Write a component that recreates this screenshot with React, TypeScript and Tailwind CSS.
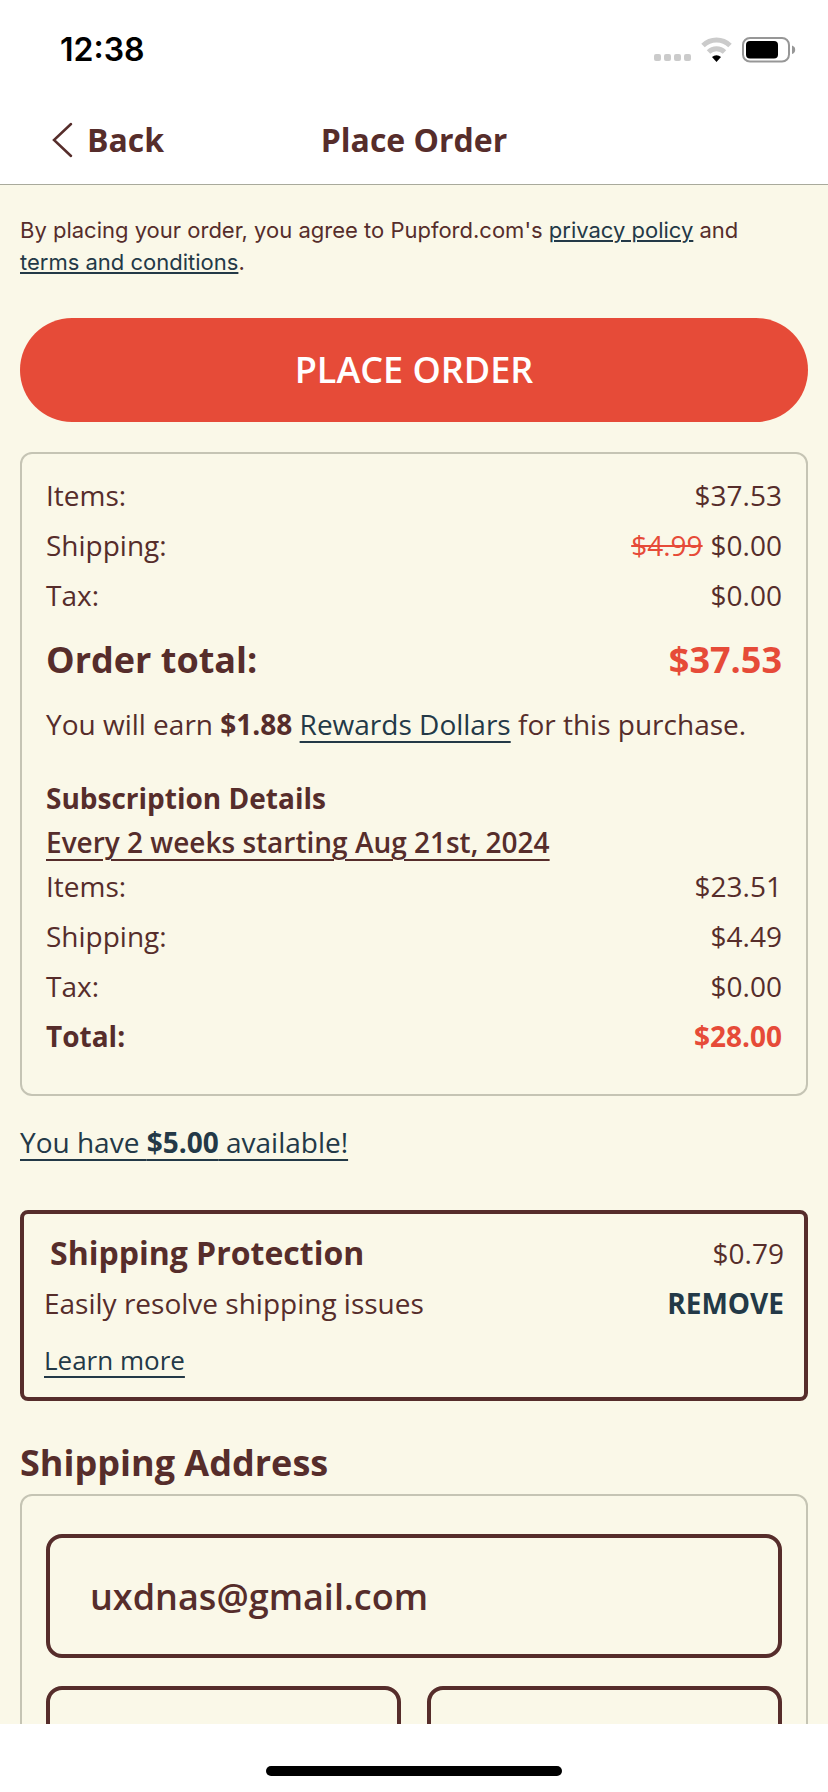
import type { ReactNode } from "react";

const ORDER_ROWS = [
  { label: "Items:", value: "$37.53" },
  { label: "Shipping:", value: "$0.00", was: "$4.99" },
  { label: "Tax:", value: "$0.00" },
];

const SUBSCRIPTION_ROWS = [
  { label: "Items:", value: "$23.51" },
  { label: "Shipping:", value: "$4.49" },
  { label: "Tax:", value: "$0.00" },
];

function StatusBar() {
  return (
    <div className="flex h-[100px] items-center justify-between pl-[60px] pr-8">
      <span className="font-[Inter] text-[32px] font-semibold leading-9 text-black">12:38</span>
      <div className="flex items-center gap-[10px]">
        <svg width="37" height="26" viewBox="0 0 37 26" fill="#cbcbcb" aria-hidden="true">
          <rect x="0" y="17" width="7" height="7" rx="2" />
          <rect x="10" y="17" width="7" height="7" rx="2" />
          <rect x="20" y="17" width="7" height="7" rx="2" />
          <rect x="30" y="17" width="7" height="7" rx="2" />
        </svg>
        <svg width="31" height="26" viewBox="0 0 31 26" fill="none" aria-hidden="true">
          <path d="M2 8.500a19.500 19.500 0 0 1 27 0" stroke="#cbcbcb" strokeWidth="5" />
          <path d="M7.500 15a11.600 11.600 0 0 1 16 0" stroke="#cbcbcb" strokeWidth="5" />
          <path d="M11 20a6.600 6.600 0 0 1 9 0L15.500 25z" fill="#000" />
        </svg>
        <svg width="54" height="26" viewBox="0 0 54 26" fill="none" aria-hidden="true">
          <rect x="1" y="1" width="46" height="23.500" rx="7" stroke="#979797" strokeWidth="2" />
          <rect x="4" y="4" width="32" height="17.500" rx="4" fill="#000" />
          <path d="M50 8.500c2 .6 3.200 2.300 3.200 4.300s-1.200 3.700-3.200 4.300z" fill="#979797" />
        </svg>
      </div>
    </div>
  );
}

function Row({ label, children }: { label: string; children: ReactNode }) {
  return (
    <div className="mb-[6px] flex justify-between leading-[44px]">
      <dt>{label}</dt>
      <dd>{children}</dd>
    </div>
  );
}

export default function App() {
  return (
    <div className="flex h-screen flex-col bg-white font-['Open_Sans',sans-serif] text-[28px] text-[#562d2b]">
      <StatusBar />

      <header className="grid h-[85px] shrink-0 grid-cols-3 items-center border-b border-[#a9aa9c] pb-1">
        <button type="button" className="ml-[52px] flex items-center gap-[14px] text-[32px] font-bold">
          <svg width="21" height="36" viewBox="0 0 21 36" fill="none" aria-hidden="true">
            <path d="M19 2 2 18l17 16" stroke="currentColor" strokeWidth="2.500" strokeLinecap="round" />
          </svg>
          Back
        </button>
        <h1 className="text-center text-[32px] font-bold">Place Order</h1>
      </header>

      <main className="min-h-0 flex-1 overflow-y-auto bg-[#faf8e8] px-5 pt-[29px] [scrollbar-width:none]">
        <p className="font-[Inter] text-[22px] leading-8">
          By placing your order, you agree to Pupford.com's{" "}
          <a href="#privacy" className="text-[#233947] underline decoration-2 underline-offset-2">
            privacy policy
          </a>{" "}
          and{" "}
          <br />
          <a href="#terms" className="text-[#233947] underline decoration-2 underline-offset-2">
            terms and conditions
          </a>
          .
        </p>

        <button
          type="button"
          className="mt-10 h-[104px] w-full rounded-full bg-[#e64b38] text-[36px] font-semibold text-white"
        >
          PLACE ORDER
        </button>

        {/* Order summary */}
        <section className="mt-[30px] rounded-xl border-2 border-[#c5c4b4] px-6 pt-[19px] pb-[30px]">
          <dl>
            {ORDER_ROWS.map((row) => (
              <Row key={row.label} label={row.label}>
                {row.was && <s className="mr-2 text-[#e64b38]">{row.was}</s>}
                {row.value}
              </Row>
            ))}
            <div className="mt-[11px] flex justify-between text-[36px] font-bold leading-[64px]">
              <dt>Order total:</dt>
              <dd className="text-[#e64b38]">$37.53</dd>
            </div>
          </dl>
          <p className="mt-[2px] leading-[60px]">
            You will earn <b>$1.88</b>{" "}
            <a href="#rewards" className="text-[#233947] underline decoration-2 underline-offset-6">
              Rewards Dollars
            </a>{" "}
            for this purchase.
          </p>
          <h2 className="mt-[22px] font-bold leading-[44px]">Subscription Details</h2>
          <p className="font-semibold leading-[44px] underline decoration-2 underline-offset-6">
            Every 2 weeks starting Aug 21st, 2024
          </p>
          <dl>
            {SUBSCRIPTION_ROWS.map((row) => (
              <Row key={row.label} label={row.label}>
                {row.value}
              </Row>
            ))}
            <div className="mb-[6px] flex justify-between font-bold leading-[44px]">
              <dt>Total:</dt>
              <dd className="text-[#e64b38]">$28.00</dd>
            </div>
          </dl>
        </section>

        <a
          href="#balance"
          className="mt-[21px] inline-block leading-[50px] text-[#233947] underline decoration-2 underline-offset-6"
        >
          You have <b>$5.00</b> available!
        </a>

        {/* Shipping protection */}
        <section className="mt-[43px] rounded-lg border-4 border-[#562d2b] px-5 pt-[14px] pb-3">
          <div className="flex justify-between leading-[50px]">
            <h2 className="ml-[6px] text-[32px] font-bold">Shipping Protection</h2>
            <span>$0.79</span>
          </div>
          <div className="flex justify-between leading-[50px]">
            <p>Easily resolve shipping issues</p>
            <button type="button" className="font-bold text-[#233947]">
              REMOVE
            </button>
          </div>
          <a
            href="#protection"
            className="mt-[7px] inline-block text-[26px] leading-[50px] text-[#233947] underline decoration-2 underline-offset-6"
          >
            Learn more
          </a>
        </section>

        {/* Shipping address */}
        <h2 className="mt-[34px] text-[36px] font-bold leading-[56px]">Shipping Address</h2>
        <form className="mt-[3px] rounded-xl border-2 border-[#c5c4b4] px-6 pt-[38px] pb-10">
          <input
            type="email"
            aria-label="Email"
            defaultValue="uxdnas@gmail.com"
            className="h-[124px] w-full rounded-2xl border-4 border-[#562d2b] px-10 text-[36px] font-semibold outline-none"
          />
          <div className="mt-7 grid grid-cols-2 gap-[26px]">
            <input
              type="text"
              aria-label="First name"
              className="h-[124px] w-full rounded-2xl border-4 border-[#562d2b] px-10 text-[36px] font-semibold outline-none"
            />
            <input
              type="text"
              aria-label="Last name"
              className="h-[124px] w-full rounded-2xl border-4 border-[#562d2b] px-10 text-[36px] font-semibold outline-none"
            />
          </div>
        </form>
      </main>

      <footer className="flex h-[68px] shrink-0 items-end justify-center bg-white pb-4">
        <div className="h-[10px] w-[296px] rounded-full bg-black" />
      </footer>
    </div>
  );
}
